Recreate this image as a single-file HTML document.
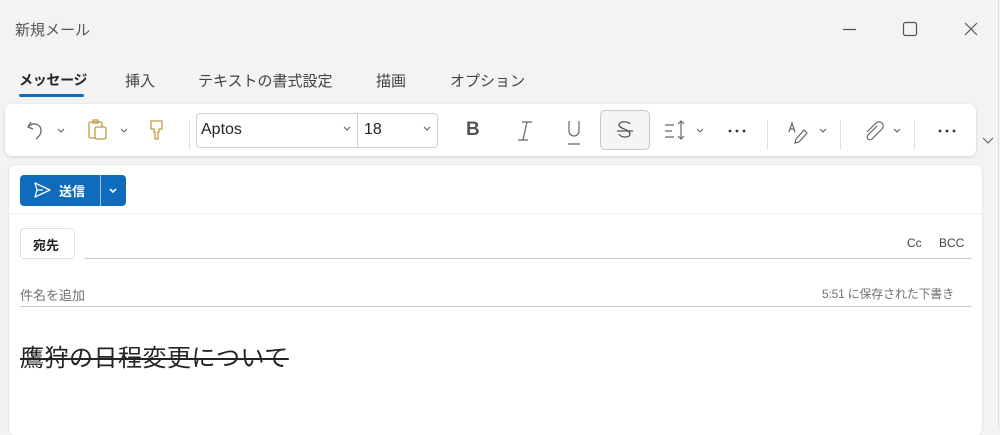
<!DOCTYPE html>
<html><head><meta charset="utf-8"><style>
*{margin:0;padding:0;box-sizing:border-box}
body{width:1000px;height:430px;background:#f3f3f3;font-family:"Liberation Sans","Noto Sans CJK JP",sans-serif;position:relative;overflow:hidden;color:#242424}
.a{position:absolute}
.t{font-size:15px;color:#424242}
svg{position:absolute;overflow:visible}
.chev{stroke:#616161;fill:none;stroke-width:1.1}
</style></head><body>
<div class="a" style="left:0;top:0;width:999px;height:430px;border-right:1px solid #e0e0e0"></div>
<div class="a t" style="left:15px;top:19px;font-size:15px;color:#555">新規メール</div>
<svg style="left:0;top:0" width="1000" height="60"><line x1="843" y1="29.5" x2="856" y2="29.5" stroke="#555" stroke-width="1.2"/><rect x="903.5" y="22.5" width="13" height="13" rx="2" fill="none" stroke="#555" stroke-width="1.2"/><path d="M965 23l12 12M977 23l-12 12" stroke="#555" stroke-width="1.2"/></svg>
<div class="a" style="left:19px;top:70px;font-size:14px;font-weight:bold;color:#242424;letter-spacing:-0.3px">メッセージ</div>
<div class="a" style="left:19px;top:94px;width:65px;height:3px;border-radius:2px;background:#0f6cbd"></div>
<div class="a t" style="left:125px;top:70px">挿入</div>
<div class="a t" style="left:198px;top:70px">テキストの書式設定</div>
<div class="a t" style="left:376px;top:70px">描画</div>
<div class="a t" style="left:450px;top:70px">オプション</div>
<div class="a" style="left:5px;top:104px;width:971px;height:52px;background:#fff;border-radius:7px;box-shadow:0 1px 3px rgba(0,0,0,.15)"></div>
<div class="a" style="left:600px;top:110px;width:50px;height:40px;border:1px solid #c7c7c7;border-radius:5px;background:#f5f5f5"></div>
<svg style="left:0;top:100px" width="1000" height="60">
<path d="M31 22l-3 5 5 2M28 27c4-5 13-4 13 4 0 4-3 6-5 8" fill="none" stroke="#666" stroke-width="1.3"/>
<path class="chev" d="M58 29l3 3 3-3"/>
<g stroke="#c19c3e" fill="none" stroke-width="1.3"><rect x="89" y="22" width="13" height="16" rx="1.5"/><rect x="93" y="20" width="5" height="3"/><rect x="95" y="27" width="11" height="12" rx="1.5" fill="#fff"/></g>
<path class="chev" d="M121 29l3 3 3-3"/>
<path d="M151 21h11v8h-3v3h-1v7h-3v-7h-1v-3h-3z" fill="none" stroke="#c19c3e" stroke-width="1.3"/>
<line x1="189.5" y1="20" x2="189.5" y2="50" stroke="#e0e0e0"/>
<path class="chev" d="M344 27l3 3 3-3M424 27l3 3 3-3"/>
<path d="M527 22l-4 18M522 22h10M518 40h10" stroke="#666" stroke-width="1.2" fill="none"/>
<path d="M569 21v10a5 5 0 0 0 10 0V21M568 44h12" stroke="#666" stroke-width="1.2" fill="none"/>
<path d="M617 31h16M630 24c-2-3-11-3-11 1 0 4 11 4 11 9 0 4-9 4-11 0" stroke="#555" stroke-width="1.3" fill="none"/>
<path d="M665 25h9M665 31h7M665 37h9M681 22v16M678 24l3-3 3 3M678 36l3 3 3-3" stroke="#666" stroke-width="1.2" fill="none"/>
<path class="chev" d="M697 29l3 3 3-3"/>
<g fill="#333"><circle cx="730" cy="31" r="1.4"/><circle cx="737" cy="31" r="1.4"/><circle cx="744" cy="31" r="1.4"/><circle cx="940" cy="31" r="1.4"/><circle cx="947" cy="31" r="1.4"/><circle cx="954" cy="31" r="1.4"/></g>
<line x1="767.5" y1="20" x2="767.5" y2="50" stroke="#e0e0e0"/>
<path d="M789 32l3-9 3 9M790 29h4M796 39l8-9 3 3-8 9-4 1z" stroke="#666" stroke-width="1.2" fill="none"/>
<path class="chev" d="M820 29l3 3 3-3"/>
<line x1="840.5" y1="20" x2="840.5" y2="50" stroke="#e0e0e0"/>
<path d="M877 26l-9 9a2.5 2.5 0 0 0 4 4l10-10a4 4 0 0 0-6-6l-9 9" stroke="#666" stroke-width="1.2" fill="none"/>
<path class="chev" d="M894 29l3 3 3-3"/>
<line x1="914.5" y1="20" x2="914.5" y2="50" stroke="#e0e0e0"/>
<path class="chev" d="M983 38l5 5 5-5"/>
</svg>
<div class="a" style="left:196px;top:113px;width:242px;height:35px;border:1px solid #d1d1d1;border-radius:4px"></div>
<div class="a" style="left:357px;top:113px;width:1px;height:35px;background:#d1d1d1"></div>
<div class="a" style="left:201px;top:121px;font-size:16px">Aptos</div>
<div class="a" style="left:364px;top:121px;font-size:16px">18</div>
<div class="a" style="left:466px;top:119px;font-size:19px;font-weight:bold;color:#555">B</div>
<div class="a" style="left:9px;top:165px;width:973px;height:270px;background:#fff;border-radius:6px;box-shadow:0 0 2px rgba(0,0,0,.15)"></div>
<div class="a" style="left:9px;top:213px;width:973px;height:1px;background:#f0f0f0"></div>
<div class="a" style="left:20px;top:175px;width:106px;height:31px;background:#0f6cbd;border-radius:4px"></div>
<div class="a" style="left:100px;top:175px;width:1px;height:31px;background:#fff;opacity:.6"></div>
<svg style="left:0;top:170px" width="200" height="40"><path d="M35 13l15 7-15 7 2-7z M37 20h6" stroke="#fff" stroke-width="1.3" fill="none" stroke-linejoin="round"/><path d="M110 19l3 3 3-3" stroke="#fff" stroke-width="1.6" fill="none"/></svg>
<div class="a" style="left:59px;top:181px;font-size:13px;font-weight:bold;color:#fff">送信</div>
<div class="a" style="left:20px;top:228px;width:55px;height:31px;border:1px solid #e0e0e0;border-radius:4px"></div>
<div class="a" style="left:33px;top:235px;font-size:13px;font-weight:bold">宛先</div>
<div class="a" style="left:85px;top:258px;width:886px;height:1px;background:#c8c8c8"></div>
<div class="a" style="left:907px;top:236px;font-size:12px;color:#444">Cc</div>
<div class="a" style="left:939px;top:236px;font-size:12px;color:#444">BCC</div>
<div class="a" style="left:20px;top:285px;font-size:13px;color:#707070">件名を追加</div>
<div class="a" style="left:822px;top:285px;font-size:12px;color:#707070;letter-spacing:-0.2px">5:51 に保存された下書き</div>
<div class="a" style="left:20px;top:306px;width:951px;height:1px;background:#c8c8c8"></div>
<div class="a" style="left:20px;top:338px;font-size:24px;letter-spacing:0.5px;color:#242424;text-decoration:line-through;text-decoration-thickness:2px">鷹狩の日程変更について</div>
</body></html>
